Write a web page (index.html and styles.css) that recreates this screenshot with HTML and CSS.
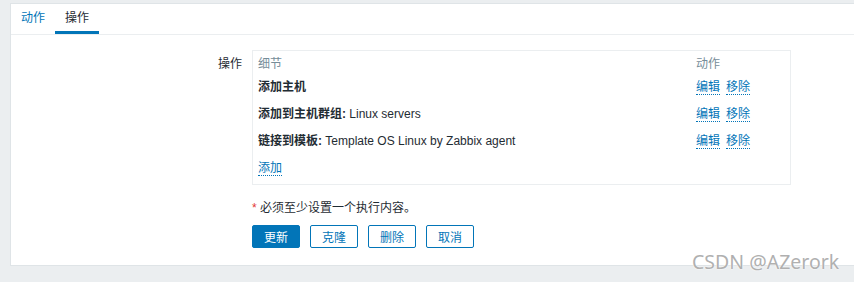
FILE: index.html
```html
<!DOCTYPE html>
<html lang="zh-CN">
<head>
    <meta charset="UTF-8">
    <title>操作</title>
    <link rel="stylesheet" href="styles.css">
</head>
<body>
    <div class="panel">
        <ul class="tabs">
            <li class="tab"><a href="#">动作</a></li>
            <li class="tab active"><a href="#">操作</a></li>
        </ul>
        <div class="form">
            <div class="form-row">
                <label class="form-label">操作</label>
                <div class="form-field">
                    <div class="op-box">
                        <table class="op-table">
                            <thead>
                                <tr>
                                    <th class="col-detail">细节</th>
                                    <th class="col-action">动作</th>
                                </tr>
                            </thead>
                            <tbody>
                                <tr>
                                    <td><b>添加主机</b></td>
                                    <td class="actions"><a href="#" class="link">编辑</a><a href="#" class="link">移除</a></td>
                                </tr>
                                <tr>
                                    <td><b>添加到主机群组:</b> Linux servers</td>
                                    <td class="actions"><a href="#" class="link">编辑</a><a href="#" class="link">移除</a></td>
                                </tr>
                                <tr>
                                    <td><b>链接到模板:</b> Template OS Linux by Zabbix agent</td>
                                    <td class="actions"><a href="#" class="link">编辑</a><a href="#" class="link">移除</a></td>
                                </tr>
                                <tr>
                                    <td colspan="2"><a href="#" class="link">添加</a></td>
                                </tr>
                            </tbody>
                        </table>
                    </div>
                </div>
            </div>
            <div class="form-row note-row">
                <span class="form-label"></span>
                <div class="form-field note"><span class="asterisk">*</span> 必须至少设置一个执行内容。</div>
            </div>
            <div class="form-row button-row">
                <span class="form-label"></span>
                <div class="form-field buttons">
                    <button class="btn primary">更新</button>
                    <button class="btn">克隆</button>
                    <button class="btn">删除</button>
                    <button class="btn">取消</button>
                </div>
            </div>
        </div>
    </div>
    <div class="watermark">CSDN @AZerork</div>
</body>
</html>
```

FILE: styles.css
```css
* {
    margin: 0;
    padding: 0;
    box-sizing: border-box;
}

body {
    background: #ebeef0;
    padding: 3px 0 0 10px;
    height: 282px;
    overflow: hidden;
    font-family: 'Liberation Sans', Arial, 'Noto Sans CJK SC', sans-serif;
    font-size: 12px;
    color: #1f2c33;
    position: relative;
}

a {
    text-decoration: none;
}

.panel {
    background: #fff;
    border: 1px solid #dfe4e7;
    border-right: none;
    height: 263px;
}

.tabs {
    list-style: none;
    display: flex;
    border-bottom: 1px solid #ebeef0;
    height: 31px;
}

.tab a {
    display: block;
    padding: 0 10px;
    height: 30px;
    line-height: 29px;
    color: #0275b8;
    border-bottom: 3px solid transparent;
}

.tab.active a {
    color: #1f2c33;
    border-bottom-color: #0275b8;
}

.form {
    padding-top: 15px;
}

.form-row {
    display: flex;
}

.form-label {
    width: 241px;
    text-align: right;
    padding-right: 10px;
    padding-top: 4px;
    flex-shrink: 0;
}

.op-box {
    width: 539px;
    height: 135px;
    border: 1px solid #ebeef0;
    padding: 0 5px;
}

.op-table {
    width: 100%;
    border-collapse: collapse;
}

.op-table th {
    text-align: left;
    font-weight: normal;
    color: #768d99;
    height: 21px;
    vertical-align: bottom;
    padding-bottom: 1px;
}

.op-table td {
    height: 27px;
    vertical-align: middle;
    white-space: nowrap;
}

.col-action {
    width: 89px;
}

.link {
    color: #0275b8;
    border-bottom: 1px dotted #0275b8;
}

.actions .link + .link {
    margin-left: 6px;
}

.note-row {
    margin-top: 15px;
}

.note {
    line-height: 16px;
}

.asterisk {
    color: #e33734;
}

.button-row {
    margin-top: 9px;
}

.buttons {
    display: flex;
    gap: 10px;
}

.btn {
    width: 48px;
    height: 23px;
    font-family: inherit;
    font-size: 12px;
    background: #fff;
    color: #0275b8;
    border: 1px solid #0275b8;
    border-radius: 2px;
    cursor: pointer;
}

.btn.primary {
    background: #0275b8;
    color: #fff;
}

.watermark {
    position: absolute;
    left: 692px;
    top: 248px;
    font-family: 'Noto Sans', 'Open Sans', sans-serif;
    font-size: 19.5px;
    color: #b0b0b0;
    text-shadow: 0 0 1px #fff, 0 0 2px #fff;
}
```
